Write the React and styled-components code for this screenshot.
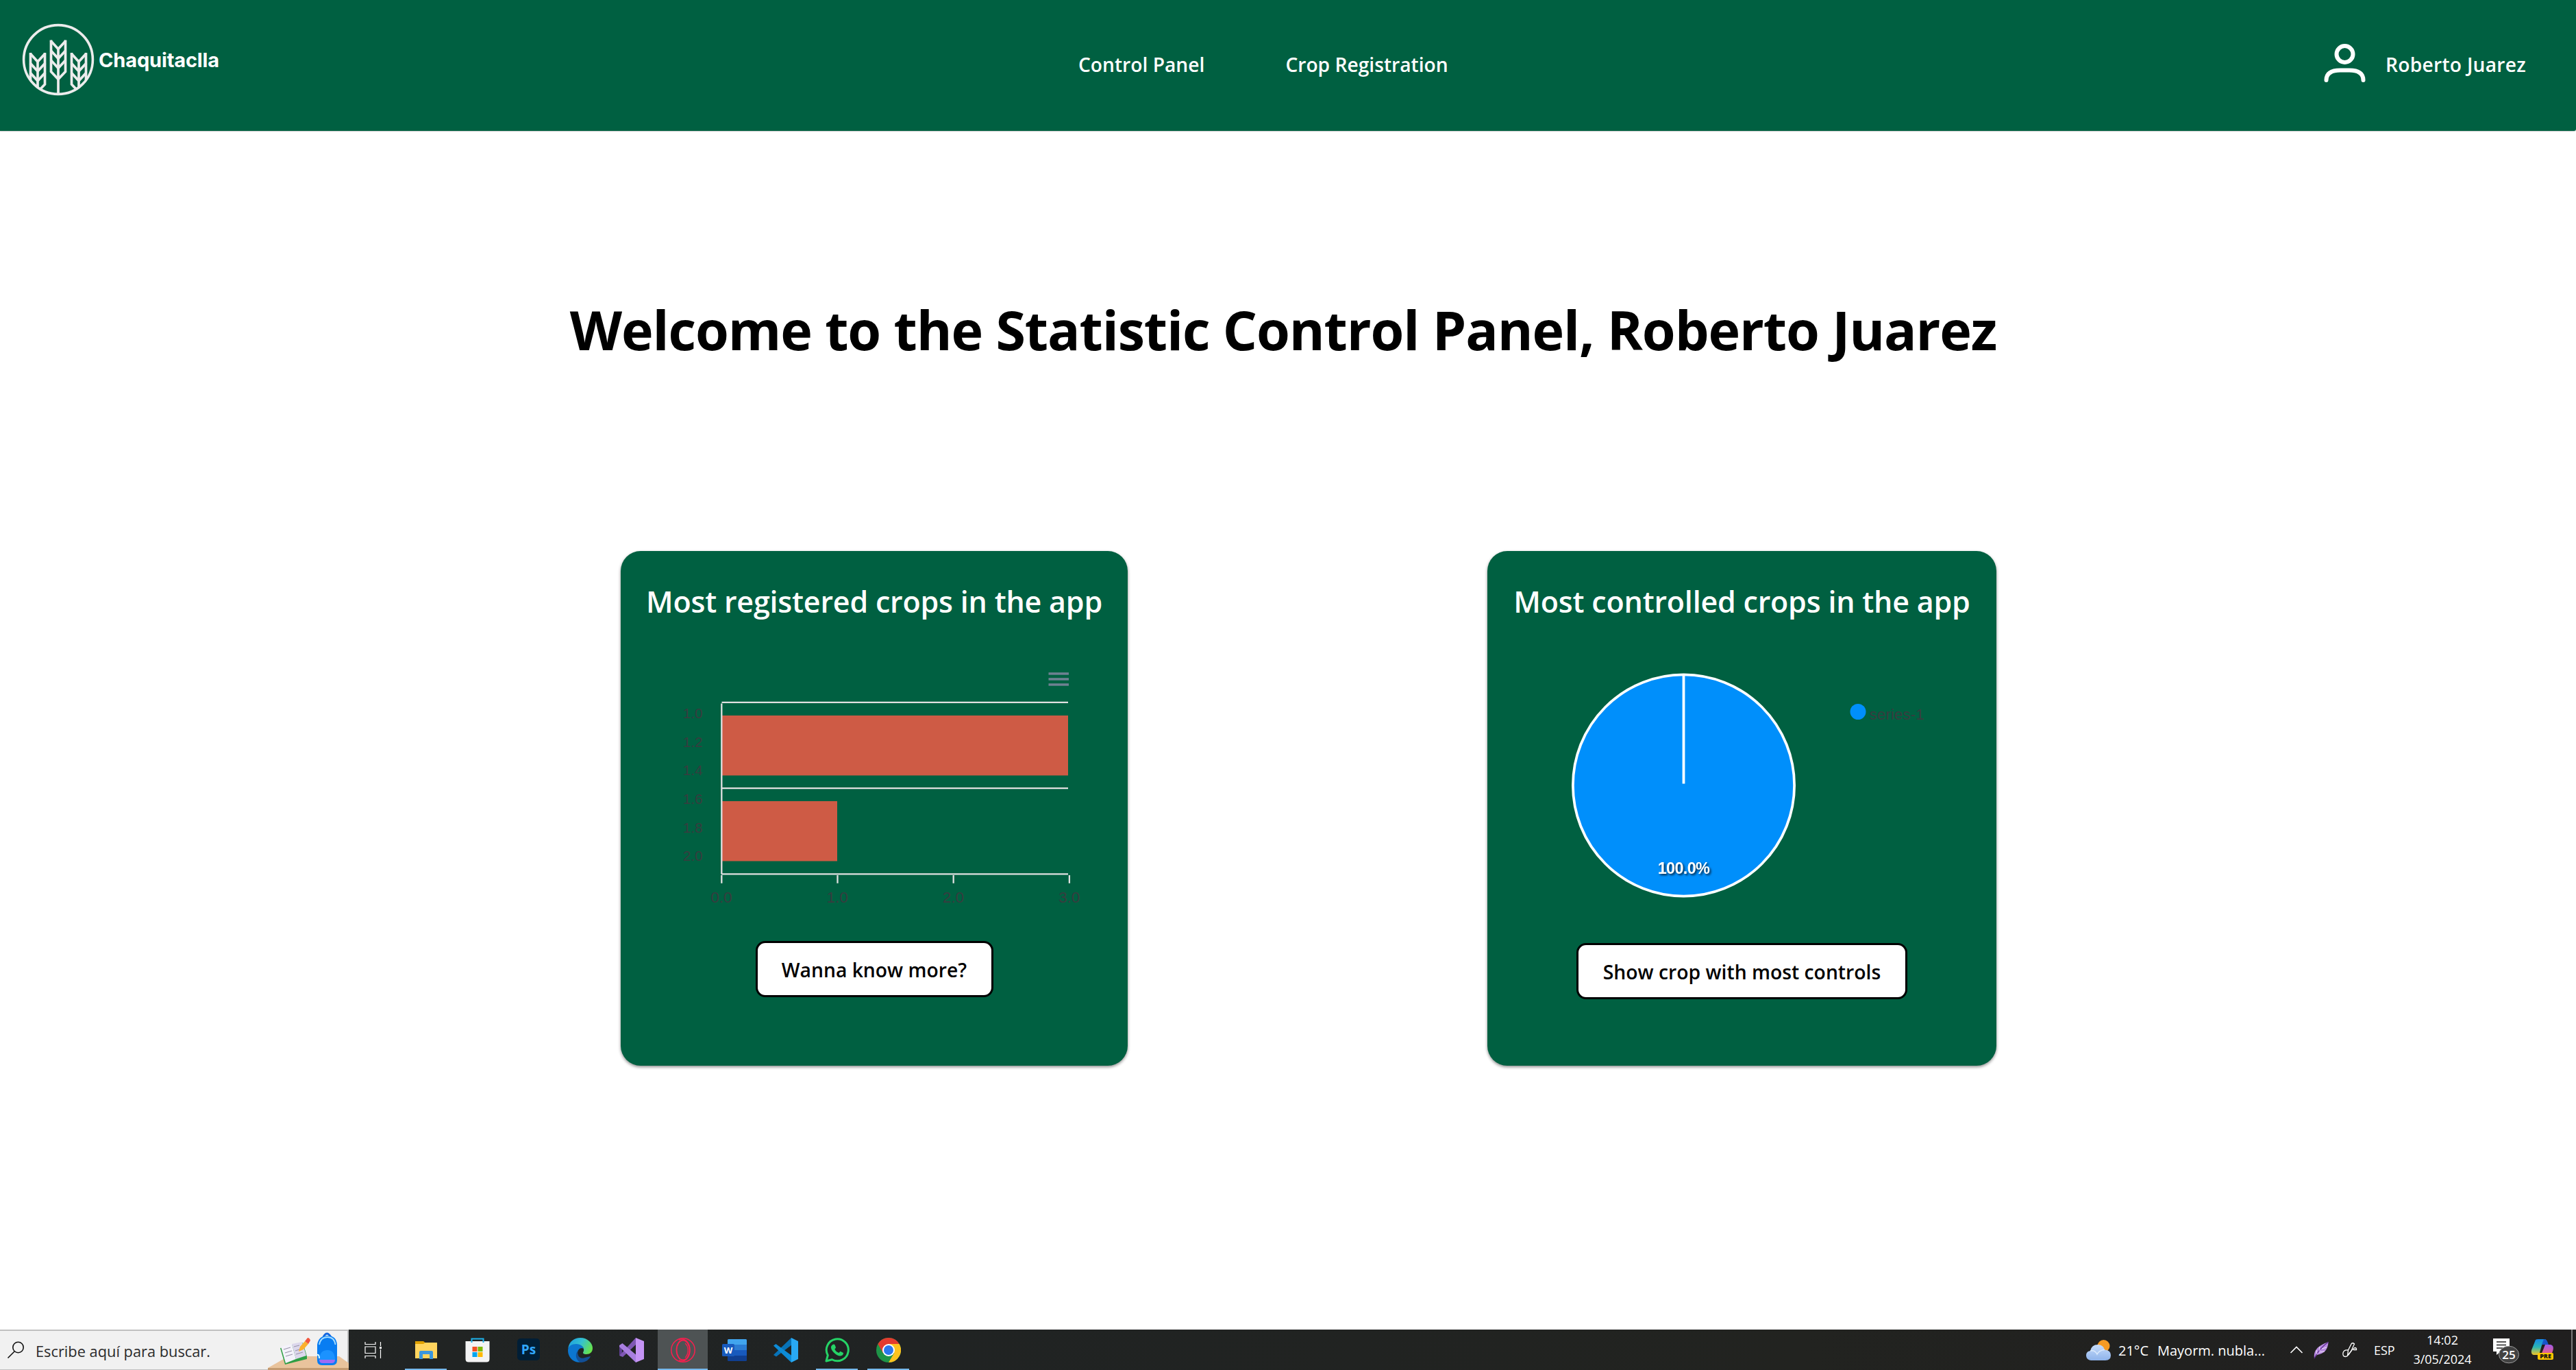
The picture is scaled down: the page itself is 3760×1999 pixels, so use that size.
import React from "react";
import styled, { createGlobalStyle } from "styled-components";

const GREEN = "#006041";
const SANS = `"Open Sans", "Noto Sans", sans-serif`;
const CHART_FONT = `"Liberation Sans", Arial, sans-serif`;

const GlobalStyle = createGlobalStyle`
  * { box-sizing: border-box; }
  body { margin: 0; background: #fff; font-family: ${SANS}; }
  svg { display: block; flex: none; }
`;

const Page = styled.div`
  display: flex;
  flex-direction: column;
  height: 1999px;
  overflow: hidden;
`;

/* ---------- Header ---------- */
const Header = styled.header`
  display: grid;
  grid-template-columns: 1574px 1fr auto;
  flex: none;
  height: 191px;
  padding-right: 73px;
  background: ${GREEN};
  border-bottom-right-radius: 3px;
  box-shadow: 0 1px 1px rgba(0, 0, 0, 0.2);
  color: #fff;
  font-size: 28.2px;
  font-weight: 600;
`;

const Brand = styled.div`
  display: flex;
  align-items: center;
  gap: 6px;
  height: 173px;
  padding-left: 32px;
`;

const BrandName = styled.span`
  font: 700 29px/34px Inter, sans-serif;
  letter-spacing: -0.15px;
  padding-top: 3px;
`;

const Nav = styled.nav`
  display: flex;
  align-items: center;
  gap: 118px;
  height: 187px;
`;

const NavLink = styled.a`
  color: inherit;
  text-decoration: none;
  white-space: nowrap;
`;

const User = styled.div`
  display: flex;
  align-items: center;
  gap: 28px;
  height: 187px;
  letter-spacing: 0.25px;
`;

/* ---------- Content ---------- */
const Main = styled.main`
  display: flex;
  flex-direction: column;
  flex: 1;
`;

const Heading = styled.h1`
  margin: 235px 14px 0 0;
  font-size: 79px;
  line-height: 110px;
  font-weight: 700;
  letter-spacing: -1.13px;
  text-align: center;
  color: #000;
`;

const Cards = styled.section`
  display: flex;
  gap: 525px;
  margin-top: 268px;
  padding-left: 906px;
`;

const Card = styled.article`
  display: flex;
  flex-direction: column;
  align-items: center;
  width: ${(p) => p.$width}px;
  height: 751px;
  padding-top: 43px;
  border-radius: 29px;
  background: ${GREEN};
  box-shadow: 0 2px 4px rgba(0, 0, 0, 0.45);
`;

const CardTitle = styled.h2`
  margin: 0 0 52px;
  color: #fff;
  font-size: 43px;
  line-height: 61px;
  font-weight: 600;
  letter-spacing: -0.2px;
  white-space: nowrap;
`;

const Button = styled.button`
  height: 82px;
  width: ${(p) => p.$width}px;
  margin-top: ${(p) => p.$top}px;
  padding: 1px 0 0;
  border: 3px solid #000;
  border-radius: 14px;
  background: #fff;
  color: #000;
  font: 600 28.3px/40px ${SANS};
  letter-spacing: 0;
`;

/* ---------- Taskbar ---------- */
const Taskbar = styled.footer`
  display: flex;
  flex: none;
  height: 59px;
  background: linear-gradient(90deg, #222524, #202323 35%, #222320 70%, #201f1f);
  color: #fff;
`;

const Search = styled.div`
  display: flex;
  align-items: center;
  width: 509px;
  padding-left: 10px;
  border: solid #c0c0c0;
  border-width: 2px 2px 1px 0;
  background: #f1f1f1;
  color: #2b2b2b;
  font-size: 21.800px;
`;

const SearchText = styled.span`
  flex: 1;
  padding: 2px 0 0 14px;
`;

const Apps = styled.div`
  display: flex;
`;

const AppSlot = styled.div`
  display: flex;
  align-items: center;
  justify-content: center;
  width: 75px;
  height: 59px;
  padding-top: 2px;
  border-bottom: 2px solid transparent;
  background: ${(p) => (p.$active ? "#4e5354" : "transparent")};
`;

const RunningApp = styled(AppSlot)`
  width: ${(p) => (p.$active ? 73 : 61)}px;
  margin: 0 ${(p) => (p.$active ? 1 : 7)}px;
  border-bottom-color: #76b9ed;
`;

const Tray = styled.div`
  display: flex;
  align-items: center;
  margin-left: auto;
  font-size: 20px;
`;

const TrayItem = styled.div`
  flex: none;
  width: ${(p) => p.$width}px;
  margin-left: ${(p) => p.$left || 0}px;
  padding-top: ${(p) => p.$top || 0}px;
  font-size: ${(p) => p.$size || 20}px;
  white-space: nowrap;
`;

const Clock = styled.div`
  width: 100px;
  margin-left: 18px;
  font-size: 18px;
  line-height: 27.5px;
  text-align: center;
`;

const PeekLine = styled.div`
  width: 2px;
  height: 59px;
  margin: 0 5px 0 24px;
  background: #7a7a7a;
`;

/* ---------- Drawings ---------- */
const Ear = ({ x, y, rows, stem }) => {
  const pitch = 14;
  const bottom = y + pitch * rows;
  return (
    <g>
      <path d={`M${x - 10.5} ${y}V${bottom + 4}L${x} ${bottom + 15}L${x + 10.5} ${bottom + 4}V${y}`} />
      {Array.from({ length: rows }, (_, i) => (
        <path key={i} d={`M${x - 11} ${y + i * pitch + 1}L${x} ${y + i * pitch + 13}L${x + 11} ${y + i * pitch + 1}`} />
      ))}
      <path d={`M${x} ${y + 12}V${stem}`} />
    </g>
  );
};

const Logo = () => (
  <svg width="106" height="106" viewBox="0 0 106 106" fill="none" stroke="#ececec" strokeWidth="3.7">
    <clipPath id="disc"><circle cx="53" cy="53" r="52" /></clipPath>
    <circle cx="53" cy="53" r="50.4" strokeWidth="3.6" />
    <g clipPath="url(#disc)">
      <Ear x={53} y={24.5} rows={3} stem={104} />
      <Ear x={23} y={43} rows={3} stem={96} />
      <Ear x={83} y={43} rows={3} stem={96} />
    </g>
  </svg>
);

const UserIcon = () => (
  <svg width="64" height="64" viewBox="0 0 64 64" fill="none" stroke="#fff" strokeWidth="6" strokeLinecap="round">
    <circle cx="32.5" cy="17" r="12" />
    <path d="M5.500 55C5.500 44 14 40.500 26 40.500H39C51 40.500 59.500 44 59.500 55" />
  </svg>
);

const BAR_DATA = [3, 1];
const Y_LABELS = ["1.0", "1.2", "1.4", "1.6", "1.8", "2.0"];
const X_LABELS = ["0.0", "1.0", "2.0", "3.0"];

const BarChart = () => (
  <svg width="740" height="380" viewBox="0 0 740 380" fontFamily={CHART_FONT}>
    <g fill="#6e8192">
      {[22, 30, 38].map((y) => <rect key={y} x="624.500" y={y - 0.8} width="29.500" height="3.500" />)}
    </g>
    <g stroke="#e0e0e0" strokeWidth="2.3">
      {[64.8, 190.2].map((y) => <path key={y} d={`M147.500 ${y}H653`} />)}
    </g>
    {BAR_DATA.map((v, i) => (
      <rect key={i} x="147.500" y={84 + i * 125} width={v * 168.5} height="87.500" fill="#ce5b45" />
    ))}
    <g stroke="#e0e0e0" strokeWidth="2.3">
      <path d="M147.300 66.500V315.500" />
      <path d="M147 315.300H653" />
      {X_LABELS.map((t, i) => <path key={t} d={`M${147.3 + i * 169.2} 317V328.800`} />)}
    </g>
    <g fill="#373d3f">
      {Y_LABELS.map((t, i) => (
        <text key={t} x="119.500" y={87.8 + i * 41.7} fontSize="20.600" textAnchor="end">{t}</text>
      ))}
      {X_LABELS.map((t, i) => (
        <text key={t} x={147 + i * 169.2} y="356.700" fontSize="22.500" textAnchor="middle">{t}</text>
      ))}
    </g>
  </svg>
);

const PieLabel = styled.text`
  font: 700 23.500px ${CHART_FONT};
  letter-spacing: -0.7px;
  fill: #fff;
  text-anchor: middle;
  filter: drop-shadow(2px 2px 1.5px rgba(0, 0, 0, 0.7));
`;

const PieChart = () => (
  <svg width="743" height="380" viewBox="0 0 743 380" fontFamily={CHART_FONT}>
    <circle cx="286.500" cy="186" r="161.600" fill="#008ffb" stroke="#fff" strokeWidth="3.800" />
    <path d="M286.500 25V183.500" stroke="#fff" strokeWidth="3.800" />
    <PieLabel x="286.500" y="315">100.0%</PieLabel>
    <circle cx="541" cy="78.500" r="11.500" fill="#008ffb" />
    <text x="557.500" y="90.300" fontSize="22.500" fill="#373d3f">series-1</text>
  </svg>
);

const SearchIcon = () => (
  <svg width="28" height="28" viewBox="0 0 28 28" fill="none" stroke="#111" strokeWidth="1.600">
    <circle cx="16.500" cy="10" r="7.700" />
    <path d="M11 16L1.500 25.500" />
  </svg>
);

const ArtSlot = styled.div`
  margin: 1px -2px -1px 0;
`;

const DeskArt = () => (
  <svg width="118" height="56" viewBox="0 0 118 56">
    <path d="M0 53L30 36H104L118 46V53Z" fill="#e9c39c" />
    <path d="M0 53H118V56H0Z" fill="#c49a70" />
    <path d="M18 24L25 48L57 40V36L51 16Z" fill="#2f9e44" />
    <path d="M19 22L35 18L41 40L26 46Z" fill="#f4f2fb" />
    <path d="M35 18L50 15L56 35L41 40Z" fill="#dcd7ec" />
    <path d="M23 26L33 23M25 31L35 28M26 36L36 33M38 22L46 20M40 28L49 25M41 33L51 30" stroke="#9a95ab" strokeWidth="1.200" />
    <path d="M45 29L47 22L54 14L59 18L52 26Z" fill="#fbb02d" />
    <path d="M54 14L58 9Q61 9 62 13L59 18Z" fill="#f2563e" />
    <path d="M81 8Q86 -2 92 8" fill="none" stroke="#1266e0" strokeWidth="3" />
    <path d="M72 19Q74 6 87 6Q100 6 101 19V42Q101 49 94 49H79Q72 49 72 42Z" fill="#087df2" />
    <path d="M75 19Q77 8 87 8Q97 8 98.500 19" fill="none" stroke="#a4dcff" strokeWidth="1.800" />
    <path d="M75 42Q75 27 87 27Q98 27 98 42Z" fill="#1b92ff" />
    <path d="M75 41H98Q98 46 93 46H80Q75 46 75 41Z" fill="#9c6cf5" />
    <path d="M72 34Q75 33 75 39" stroke="#dff" strokeWidth="2" fill="none" />
  </svg>
);

const TaskViewIcon = () => (
  <svg width="32" height="26" viewBox="0 0 32 26" fill="none" stroke="#fff" strokeWidth="1.200">
    <path d="M2 1V4.500H17V1M2 8H17V17.500H2ZM2 25V21.500H17V25M24.500 1V7M24.500 12V25" />
    <rect x="23" y="8" width="3" height="3" fill="#fff" stroke="none" />
  </svg>
);

const ExplorerIcon = () => (
  <svg width="34" height="30" viewBox="0 0 34 30">
    <path d="M1 2H13L15.500 4V9H1Z" fill="#dfa000" />
    <path d="M1 6H13L15.500 4H33V27H1Z" fill="#ffd45e" />
    <path d="M7 28V18Q7 16 9 16H25Q27 16 27 18V28H22V21H12V28Z" fill="#3a96dd" />
  </svg>
);

const StoreIcon = () => (
  <svg width="36" height="36" viewBox="0 0 36 36">
    <path d="M.5 5H35.500V31Q35.500 35.500 31 35.500H5Q.5 35.500 .5 31Z" fill="#f3f3f3" />
    <path d="M9.500 7V1.500H26.500V7" fill="none" stroke="#1fb2ea" strokeWidth="2" />
    <rect x="10.500" y="13" width="7" height="7" fill="#f25022" />
    <rect x="18.500" y="13" width="7" height="7" fill="#7fba00" />
    <rect x="10.500" y="21" width="7" height="7" fill="#00a4ef" />
    <rect x="18.500" y="21" width="7" height="7" fill="#ffb900" />
  </svg>
);

const PhotoshopIcon = () => (
  <svg width="33" height="34" viewBox="0 0 33 34">
    <rect width="33" height="32" rx="5" fill="#001e36" />
    <text x="16.500" y="22.500" fontFamily={SANS} fontSize="19" fontWeight="700" fill="#31a8ff" textAnchor="middle">Ps</text>
  </svg>
);

const EdgeIcon = () => (
  <svg width="36" height="36" viewBox="0 0 36 36">
    <defs>
      <linearGradient id="edgeTop" x1="0" x2="1" y1=".2" y2=".6">
        <stop offset="0" stopColor="#1b9fe0" /><stop offset=".5" stopColor="#35c1d0" /><stop offset="1" stopColor="#67e34a" />
      </linearGradient>
    </defs>
    <path d="M0 16C2 5 9 0 18 0C29 0 36 8 36 15C36 21 32 24 27 24C23 24 21 22.500 22.500 20.500C25 16 21 10 13 10C6 10 1 13 0 16Z" fill="url(#edgeTop)" />
    <path d="M0 18C0 12 6 9 12 9C19 9 22.500 13 23 16C19 13 14 17 14 22C14 29 20 33 28 31C21 37 12 37 6 32C2 28 0 24 0 18Z" fill="#0c76cf" />
    <path d="M15 18C12 25 17 32 25 29C29 28 31 27 33 27C31 32 25 36 19 36C12 34 9 24 15 18Z" fill="#124f96" />
  </svg>
);

const VisualStudioIcon = () => (
  <svg width="36" height="36" viewBox="0 0 36 36">
    <path d="M0 11L4 12V24L0 26Z" fill="#5f3f93" />
    <path d="M0 26L24 0V10L5 28Z" fill="#7f57b4" />
    <path d="M0 11L4.500 8L27 27L24 36L0 13Z" fill="#a97fe0" />
    <path d="M24 0L36 5V31L24 36Z" fill="#c594f5" />
  </svg>
);

const OperaIcon = () => (
  <svg width="36" height="36" viewBox="0 0 36 36" fill="none" stroke="#fa1e4e">
    <ellipse cx="18" cy="18" rx="17.200" ry="17.200" strokeWidth="1.500" />
    <ellipse cx="18" cy="18" rx="9.500" ry="14.500" strokeWidth="1.800" />
    <path d="M12 3C20 -1 28 7 28 18C28 29 20 37 12 33" strokeWidth="1.400" />
    <path d="M21 8C27 13 26 24 21 29" strokeWidth="1.200" />
  </svg>
);

const WordIcon = () => (
  <svg width="36" height="32" viewBox="0 0 36 32">
    <rect x="8" width="28" height="32" rx="1.500" fill="#103f91" />
    <path d="M8 1.500Q8 0 9.500 0H34.500Q36 0 36 1.500V8H8Z" fill="#41a5ee" />
    <rect x="8" y="8" width="28" height="8" fill="#2b7cd3" />
    <rect x="8" y="16" width="28" height="8" fill="#185abd" />
    <rect y="7" width="18" height="18" rx="1.500" fill="#185abd" />
    <text x="9" y="21" fontFamily={SANS} fontSize="13" fontWeight="700" fill="#fff" textAnchor="middle">W</text>
  </svg>
);

const VSCodeIcon = () => (
  <svg width="36" height="36" viewBox="0 0 36 36">
    <path d="M0 25L26 0L27 10L4 27.500L0 25Z" fill="#0873b8" />
    <path d="M0 11.500L3.500 9L28 27L26 36Z" fill="#0d8bd6" />
    <path d="M26 0L36 5V31L26 36Z" fill="#29a9f3" />
  </svg>
);

const WhatsAppIcon = () => (
  <svg width="36" height="36" viewBox="0 0 36 36">
    <path d="M2 34L4.300 25.500A16 16 0 1 1 10.500 31.700Z" fill="none" stroke="#25d366" strokeWidth="3" strokeLinejoin="round" />
    <path d="M12.500 9.500Q14 9 14.700 10.800L16 14Q16 15 14.300 16.500Q16 20.500 20.500 22L22.500 19.800L27 22Q27 26 22.500 26.500Q18 26.500 13 21.500Q8.500 17 9 13Q10 10 12.500 9.500Z" fill="#25d366" />
  </svg>
);

const ChromeIcon = () => (
  <svg width="36" height="36" viewBox="0 0 36 36">
    <circle cx="18" cy="18" r="18" fill="#1e9447" />
    <path d="M2.400 9A18 18 0 0 1 33.600 9H18L10 22.500Z" fill="#e33b2e" />
    <path d="M33.600 9A18 18 0 0 1 18 36L26 22.500L18 9Z" fill="#fcc31e" />
    <circle cx="18" cy="18" r="9" fill="#fff" />
    <circle cx="18" cy="18" r="7" fill="#2a78ec" />
  </svg>
);

const WeatherIcon = () => (
  <svg width="38" height="32" viewBox="0 0 38 32">
    <defs>
      <linearGradient id="cloud" x1="0" x2="0" y1="0" y2="1">
        <stop offset="0" stopColor="#c7dcfa" /><stop offset="1" stopColor="#8eb3ea" />
      </linearGradient>
    </defs>
    <circle cx="26.500" cy="10" r="9" fill="#f59a23" />
    <path d="M8 31Q1 30 1 23.500Q1 18 7 17Q9 8 18 8Q26 8 28 15.500Q37 16 37 23.500Q37 31 29 31Z" fill="url(#cloud)" />
    <path d="M7 17Q14 15.500 17 22Q20 16 28 15.500" stroke="#dbe9fc" strokeWidth="1.500" fill="none" />
  </svg>
);

const ChevronIcon = () => (
  <svg width="22" height="14" viewBox="0 0 22 14" fill="none" stroke="#fff" strokeWidth="1.600">
    <path d="M2.500 11L11 2.500L19.500 11" />
  </svg>
);

const FeatherIcon = () => (
  <svg width="25" height="26" viewBox="0 0 25 26">
    <path d="M2 24C1 14 6 7 22.500 1C22 12 17 18 6 20Z" fill="#b98ce0" />
    <path d="M2 25C6 16 12 9 22.500 1" stroke="#5f2c92" strokeWidth="1.300" fill="none" />
    <path d="M6 19L5 13M10 14L9.500 8M9 16L17 15M13 11L20 9" stroke="#eee0fa" strokeWidth="1" />
  </svg>
);

const PenIcon = () => (
  <svg width="24" height="24" viewBox="0 0 24 24" fill="none" stroke="#fff" strokeWidth="1.300">
    <path d="M8.500 20L9.500 12L14 3Q16 .5 18.500 3L14 13Z" />
    <path d="M9.500 12Q3 11 2 16Q1 21.500 5.500 21.500Q9 21 12 16T19 8.500Q22 8.500 21.500 11.500H17" />
  </svg>
);

const NotificationIcon = () => (
  <svg width="42" height="42" viewBox="0 0 42 42">
    <path d="M2 4H26V23H13L7 28V23H2Z" fill="#fff" />
    <path d="M7 9H21M7 13.500H21M7 18H16" stroke="#222" strokeWidth="1.300" />
    <ellipse cx="25" cy="27.500" rx="14.500" ry="12.300" fill="#424242" stroke="#9b9b9b" />
    <text x="25" y="33.500" fontFamily={SANS} fontSize="17" fontWeight="600" fill="#fff" textAnchor="middle">25</text>
  </svg>
);

const CopilotIcon = () => (
  <svg width="36" height="34" viewBox="0 0 36 34">
    <defs>
      <linearGradient id="copA" x1="0" x2="0" y1="0" y2="1">
        <stop offset="0" stopColor="#1488e8" /><stop offset=".5" stopColor="#2bb6b4" /><stop offset="1" stopColor="#f2c526" />
      </linearGradient>
      <linearGradient id="copB" x1="0" x2="0" y1="0" y2="1">
        <stop offset="0" stopColor="#a05bea" /><stop offset="1" stopColor="#f2607a" />
      </linearGradient>
    </defs>
    <path d="M8 2Q9 1 12 1H23L17 10L13 24H5Q1 23 2 17Z" fill="url(#copA)" />
    <path d="M20 1Q24 1 25 4L27 9H17Z" fill="#1755c8" />
    <path d="M22 9H30Q35 10 33.500 17L31 24H16Z" fill="url(#copB)" />
    <rect x="11" y="21" width="23" height="10" rx="2" fill="#ffc700" />
    <text x="22.500" y="29.200" fontFamily={SANS} fontSize="9" fontWeight="800" fill="#111" textAnchor="middle">PRE</text>
  </svg>
);

export default function App() {
  return (
    <Page>
      <GlobalStyle />
      <Header>
        <Brand>
          <Logo />
          <BrandName>Chaquitaclla</BrandName>
        </Brand>
        <Nav>
          <NavLink>Control Panel</NavLink>
          <NavLink>Crop Registration</NavLink>
        </Nav>
        <User>
          <UserIcon />
          <span>Roberto Juarez</span>
        </User>
      </Header>

      <Main>
        <Heading>Welcome to the Statistic Control Panel, Roberto Juarez</Heading>
        <Cards>
          <Card $width={740}>
            <CardTitle>Most registered crops in the app</CardTitle>
            <BarChart />
            <Button $width={347} $top={33}>Wanna know more?</Button>
          </Card>
          <Card $width={743}>
            <CardTitle>Most controlled crops in the app</CardTitle>
            <PieChart />
            <Button $width={483} $top={36}>Show crop with most controls</Button>
          </Card>
        </Cards>
      </Main>

      <Taskbar>
        <Search>
          <SearchIcon />
          <SearchText>Escribe aquí para buscar.</SearchText>
          <ArtSlot><DeskArt /></ArtSlot>
        </Search>
        <Apps>
          <AppSlot><TaskViewIcon /></AppSlot>
          <RunningApp><ExplorerIcon /></RunningApp>
          <AppSlot><StoreIcon /></AppSlot>
          <AppSlot><PhotoshopIcon /></AppSlot>
          <AppSlot><EdgeIcon /></AppSlot>
          <AppSlot><VisualStudioIcon /></AppSlot>
          <RunningApp $active><OperaIcon /></RunningApp>
          <AppSlot><WordIcon /></AppSlot>
          <AppSlot><VSCodeIcon /></AppSlot>
          <RunningApp><WhatsAppIcon /></RunningApp>
          <RunningApp><ChromeIcon /></RunningApp>
        </Apps>
        <Tray>
          <WeatherIcon />
          <TrayItem $width={57} $left={10} $top={2}>21°C</TrayItem>
          <TrayItem $width={192} $top={2}>Mayorm. nubla...</TrayItem>
          <ChevronIcon />
          <TrayItem $width={25} $left={13}><FeatherIcon /></TrayItem>
          <TrayItem $width={24} $left={17}><PenIcon /></TrayItem>
          <TrayItem $width={32} $left={23} $top={1} $size={18}>ESP</TrayItem>
          <Clock>
            <div>14:02</div>
            <div>3/05/2024</div>
          </Clock>
          <TrayItem $width={42} $left={22}><NotificationIcon /></TrayItem>
          <TrayItem $width={36} $left={14}><CopilotIcon /></TrayItem>
          <PeekLine />
        </Tray>
      </Taskbar>
    </Page>
  );
}
